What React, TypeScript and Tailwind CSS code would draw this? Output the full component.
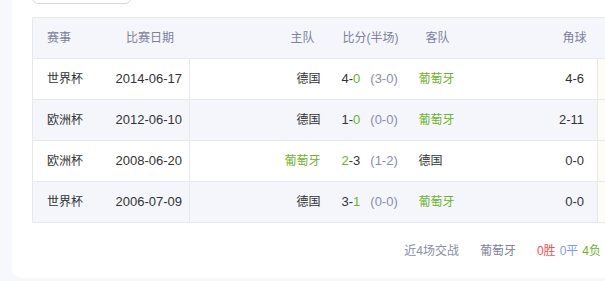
const rows = [
  { cup: "世界杯", date: "2014-06-17", home: "德国", hs: "4", as: "0", half: "(3-0)", away: "葡萄牙", corner: "4-6" },
  { cup: "欧洲杯", date: "2012-06-10", home: "德国", hs: "1", as: "0", half: "(0-0)", away: "葡萄牙", corner: "2-11" },
  { cup: "欧洲杯", date: "2008-06-20", home: "葡萄牙", hs: "2", as: "3", half: "(1-2)", away: "德国", corner: "0-0" },
  { cup: "世界杯", date: "2006-07-09", home: "德国", hs: "3", as: "1", half: "(0-0)", away: "葡萄牙", corner: "0-0" },
];

const green = "text-[#6cb22a]";

export default function App() {
  return (
    <div
      className="w-[605px] h-[281px] overflow-hidden bg-[#f7f8fd] text-[12px] text-[#333]"
      style={{ fontFamily: "'Liberation Sans', 'Noto Sans CJK SC', sans-serif" }}
    >
      <div className="flow-root ml-[12px] w-[609px] h-[278px] bg-white rounded-bl-[10px] px-5">
        {/* top filter button, mostly scrolled out */}
        <div className="-mt-[24px] w-[99px] h-[28px] rounded-[6px] border border-[#d5d9e4] bg-white" />

        <table className="mt-[13px] w-[640px] table-fixed border-collapse">
          <colgroup>
            <col className="w-[78px]" />
            <col className="w-[79px]" />
            <col className="w-[141px]" />
            <col className="w-[78px]" />
            <col className="w-[72px]" />
            <col className="w-[117px]" />
            <col />
          </colgroup>
          <thead>
            <tr className="h-[41px] bg-[#f5f6fb] text-[#7d809c]">
              <th className="border-l border-y border-[#e6e8f0] font-normal text-left pl-[14px]">赛事</th>
              <th className="border-y border-[#e6e8f0] font-normal text-center">比赛日期</th>
              <th className="border-y border-[#e6e8f0] font-normal text-right pr-[16px]">主队</th>
              <th className="border-y border-[#e6e8f0] font-normal text-left pl-[12px]">比分(半场)</th>
              <th className="border-y border-[#e6e8f0] font-normal text-left pl-[17px]">客队</th>
              <th className="border-y border-[#e6e8f0] font-normal text-right pr-[11px]">角球</th>
              <th className="border-y border-[#e6e8f0] font-normal" />
            </tr>
          </thead>
          <tbody>
            {rows.map((r, i) => {
              const homePt = r.home === "葡萄牙";
              return (
                <tr key={i} className={`h-[41px] ${i % 2 === 1 ? "bg-[#f5f6fb]" : "bg-white"}`}>
                  <td className="border-l border-b border-[#e6e8f0] pl-[14px]">{r.cup}</td>
                  <td className="border-b border-r border-[#e6e8f0] text-right pr-[7px] text-[13px]">{r.date}</td>
                  <td className={`border-b border-[#e6e8f0] text-right pr-[10px] ${homePt ? green : ""}`}>{r.home}</td>
                  <td className="border-b border-[#e6e8f0] pl-[11px] whitespace-nowrap text-[13px]">
                    <span className={homePt ? green : ""}>{r.hs}</span>
                    <span>-</span>
                    <span className={homePt ? "" : green}>{r.as}</span>
                    <span className="ml-[10px] text-[#8a8ea8]">{r.half}</span>
                  </td>
                  <td className={`border-b border-[#e6e8f0] pl-[10px] ${homePt ? "" : green}`}>{r.away}</td>
                  <td className="border-b border-r border-[#e6e8f0] text-right pr-[13px] text-[13px]">{r.corner}</td>
                  <td className="border-b border-[#e6e8f0] bg-[#fffcf5]" />
                </tr>
              );
            })}
          </tbody>
        </table>

        <div className="w-[569px] flex justify-end items-center mt-[19px] text-[#8a8ea8]">
          <span>近4场交战</span>
          <span className="ml-[21px] text-[#7d809c]">葡萄牙</span>
          <span className="ml-[21px] text-[#ff4d4f]">0胜</span>
          <span className="ml-[4px] text-[#7f9ef0]">0平</span>
          <span className="ml-[4px] text-[#6cb22a]">4负</span>
        </div>
      </div>
    </div>
  );
}
